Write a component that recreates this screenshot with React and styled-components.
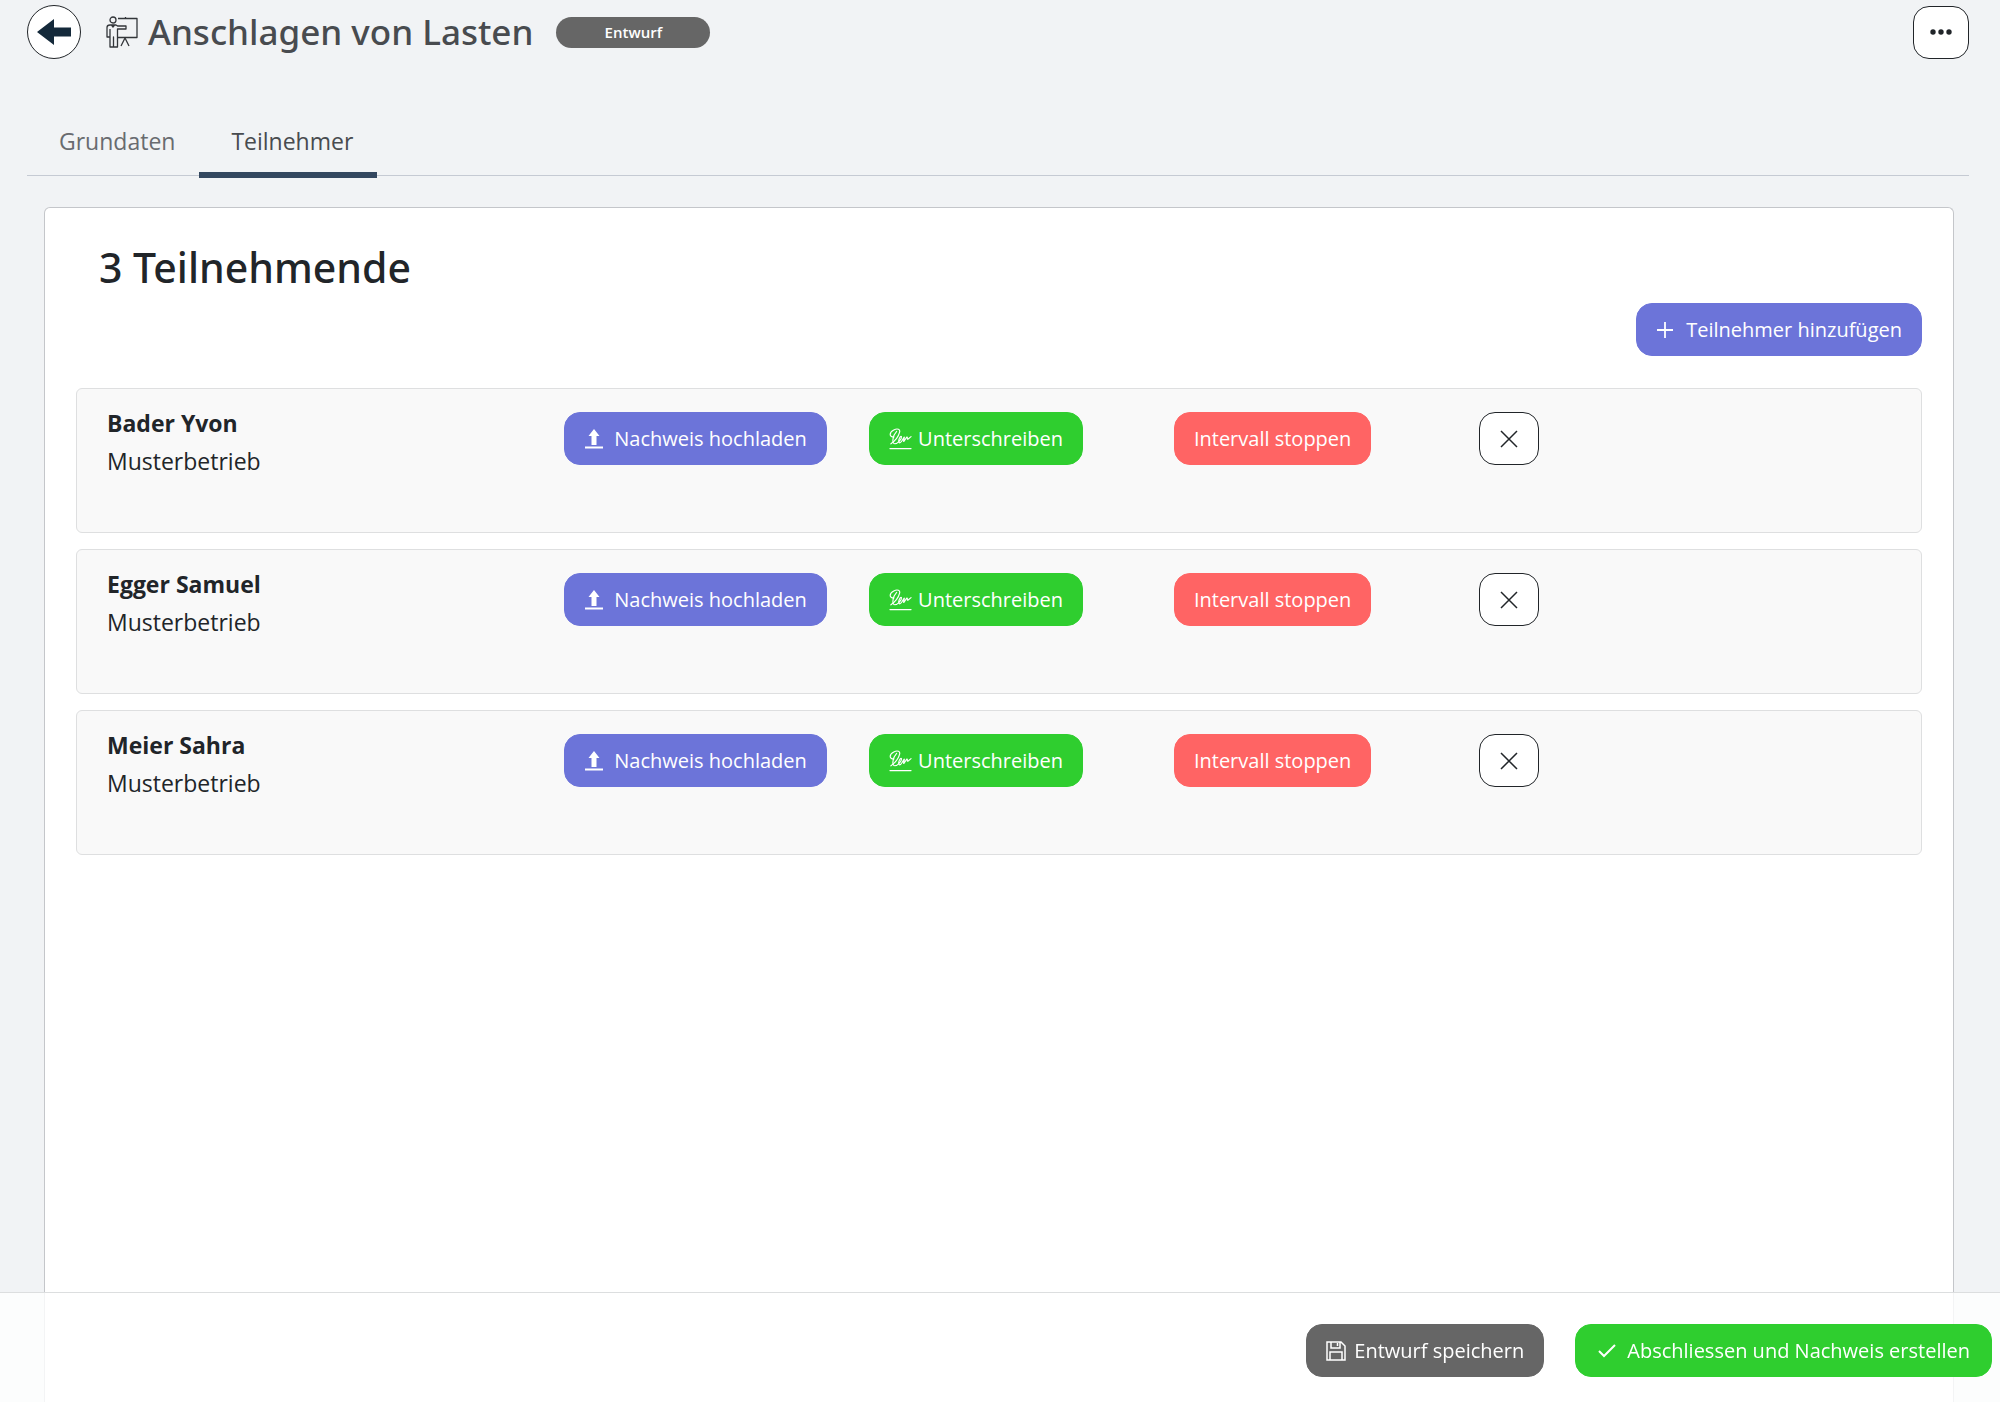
import React, { useState } from 'react'
import styled, { createGlobalStyle } from 'styled-components'

const participants = [
    { id: 1, name: 'Bader Yvon', company: 'Musterbetrieb' },
    { id: 2, name: 'Egger Samuel', company: 'Musterbetrieb' },
    { id: 3, name: 'Meier Sahra', company: 'Musterbetrieb' }
]

const BackIcon = () => (
    <svg width="36" height="28" viewBox="0 0 36 28" fill="#14293a" aria-hidden="true">
        <path d="M1 14 18 1v8.500h17v9H18V27z" />
    </svg>
)

const TrainingIcon = () => (
    <svg width="32" height="32" viewBox="0 0 32 32" fill="none" stroke="#33363a" strokeWidth="1.300" strokeLinejoin="round" aria-hidden="true">
        <circle cx="7" cy="4" r="3" />
        <path d="M12 2.500H31v19H11.500M19.500 2.500V1" />
        <path d="M4 9h6l1.500 1H20v3h-8.500V31H7.500V21V31H4V21H1V11.500Q1 9 4 9zM4 13v8M5.500 9L7 11l1.500-2" />
        <path d="M19 22l-4 8M19 22l4 8" />
    </svg>
)

const UploadIcon = () => (
    <svg width="20" height="20" viewBox="0 0 20 20" fill="currentColor" aria-hidden="true">
        <path d="M10 0l5.500 7H12.500v9h-5V7H4.500zM1 17.500h18v2H1z" />
    </svg>
)

const SignatureIcon = () => (
    <svg width="23" height="22" viewBox="0 0 24 22" fill="none" stroke="currentColor" strokeWidth="1.200" strokeLinecap="round" strokeLinejoin="round" aria-hidden="true">
        <path d="M5 9C0 9 0 4 5 1.500C9 -0.500 12 1 11 4C10 8 6 13 2 16" />
        <path d="M8 3C4 7 2.500 16 6 16C9 16 13.500 11 13 8.500C12 6.500 8.500 14 11 15C13 15.500 15.500 8.500 16 9S14.500 14 15.500 13.500S18.500 8 19 9S18.500 12 20 11L23 8.500" />
        <path d="M1 21h22" />
    </svg>
)

const PlusIcon = () => (
    <svg width="18" height="18" viewBox="0 0 18 18" stroke="currentColor" strokeWidth="1.800" aria-hidden="true">
        <path d="M9 1v16M1 9h16" />
    </svg>
)

const CloseIcon = () => (
    <svg width="18" height="18" viewBox="0 0 18 18" stroke="currentColor" strokeWidth="1.500" aria-hidden="true">
        <path d="M1 1l16 16M17 1L1 17" />
    </svg>
)

const MoreIcon = () => (
    <svg width="22" height="6" viewBox="0 0 22 6" fill="currentColor" aria-hidden="true">
        <circle cx="3" cy="3" r="2.700" />
        <circle cx="11" cy="3" r="2.700" />
        <circle cx="19" cy="3" r="2.700" />
    </svg>
)

const SaveIcon = () => (
    <svg width="20" height="20" viewBox="0 0 20 20" fill="none" stroke="currentColor" strokeWidth="1.500" aria-hidden="true">
        <path d="M1 1h14l4 4v14H1zM5 1v6h9V1M11.500 2v3M4 19v-8h12v8" />
    </svg>
)

const CheckIcon = () => (
    <svg width="20" height="14" viewBox="0 0 20 14" fill="none" stroke="currentColor" strokeWidth="2" aria-hidden="true">
        <path d="M2 7l5 5L18 1" />
    </svg>
)

const ParticipantRow = ({ participant, onRemove }) => (
    <Row>
        <Cell>
            <Name>{participant.name}</Name>
            <Company>{participant.company}</Company>
        </Cell>
        <Cell>
            <Button type="button" $color="#6c74d9" $gap="10px"><UploadIcon />Nachweis hochladen</Button>
        </Cell>
        <Cell>
            <Button type="button" $color="#2fce2f" $gap="6px"><SignatureIcon />Unterschreiben</Button>
        </Cell>
        <Cell>
            <Button type="button" $color="#ff6464">Intervall stoppen</Button>
        </Cell>
        <Cell>
            <OutlineButton type="button" aria-label="Entfernen" onClick={() => onRemove(participant.id)}><CloseIcon /></OutlineButton>
        </Cell>
    </Row>
)

const App = () => {
    const [tab, setTab] = useState('Teilnehmer')
    const [rows, setRows] = useState(participants)
    const handleRemove = id => setRows(rows.filter(r => r.id !== id))

    return (
        <Page>
            <GlobalStyle />
            <Header>
                <BackButton type="button" aria-label="Zurück"><BackIcon /></BackButton>
                <TitleGroup>
                    <TrainingIcon />
                    <Title>Anschlagen von Lasten</Title>
                </TitleGroup>
                <Badge>Entwurf</Badge>
                <MoreButton type="button" aria-label="Mehr"><MoreIcon /></MoreButton>
            </Header>
            <Tabs role="tablist">
                {['Grundaten', 'Teilnehmer'].map(label => (
                    <Tab key={label} type="button" role="tab" aria-selected={tab === label} $active={tab === label} onClick={() => setTab(label)}>
                        {label}
                    </Tab>
                ))}
            </Tabs>
            <Card>
                <Heading>{rows.length} Teilnehmende</Heading>
                <Actions>
                    <Button type="button" $color="#6c74d9" $gap="12px"><PlusIcon />Teilnehmer hinzufügen</Button>
                </Actions>
                <List>
                    {rows.map(r => <ParticipantRow key={r.id} participant={r} onRemove={handleRemove} />)}
                </List>
            </Card>
            <Footer>
                <Button type="button" $color="#666666"><SaveIcon />Entwurf speichern</Button>
                <Button type="button" $color="#2fce2f" $gap="10px" $pad="21px"><CheckIcon />Abschliessen und Nachweis erstellen</Button>
            </Footer>
        </Page>
    )
}

const GlobalStyle = createGlobalStyle`
    * {
        box-sizing: border-box;
    }
    body {
        margin: 0;
        background: #f1f3f5;
        color: #212529;
        font-family: 'Segoe UI', 'Open Sans', 'Noto Sans', sans-serif;
        font-size: 23px;
    }
    button {
        font-family: inherit;
        cursor: pointer;
    }
`

const Page = styled.div`
    display: flex;
    flex-direction: column;
    min-height: 100vh;
`

const Header = styled.header`
    display: flex;
    align-items: center;
    padding: 5px 31px 0 27px;
`

const BackButton = styled.button`
    display: flex;
    align-items: center;
    justify-content: center;
    width: 54px;
    height: 54px;
    padding: 0;
    border: 1px solid #212529;
    border-radius: 50%;
    background: #fff;
`

const TitleGroup = styled.div`
    display: flex;
    align-items: center;
    gap: 10px;
    margin: 0 23px 0 25px;
`

const Title = styled.h1`
    margin: 0;
    color: #484b4f;
    font-family: 'Segoe UI', 'Noto Sans', sans-serif;
    font-size: 35px;
    font-weight: 500;
    line-height: 48px;
`

const Badge = styled.span`
    width: 154px;
    border-radius: 16px;
    background: #666;
    color: #fff;
    font-size: 15px;
    font-weight: 600;
    line-height: 31px;
    text-align: center;
`

const Button = styled.button`
    display: inline-flex;
    align-items: center;
    gap: ${props => props.$gap || '8px'};
    height: 53px;
    padding: 0 ${props => props.$pad || '19px'};
    border: 1px solid ${props => props.$color};
    border-radius: 16px;
    background: ${props => props.$color};
    color: #fff;
    font-size: 20px;
    white-space: nowrap;
`

const OutlineButton = styled(Button)`
    justify-content: center;
    width: 60px;
    padding: 0;
    border-color: #212529;
    background: #fff;
    color: #212529;
`

const MoreButton = styled(OutlineButton)`
    width: 56px;
    margin-left: auto;
`

const Tabs = styled.div`
    display: flex;
    margin: 50px 31px 0 27px;
    border-bottom: 1px solid #c5cad3;
`

const Tab = styled.button`
    height: 69px;
    margin-bottom: -3px;
    padding: 0 24px 0 32px;
    border: 0;
    border-bottom: 6px solid ${props => props.$active ? '#33475f' : 'transparent'};
    background: transparent;
    color: ${props => props.$active ? '#484b4f' : '#686b6f'};
    font-size: 23px;
`

const Card = styled.main`
    flex: 1;
    margin: 31px 46px 0 44px;
    padding: 31px 31px 140px;
    border: 1px solid #c4c6ca;
    border-bottom: 0;
    border-radius: 6px 6px 0 0;
    background: #fff;
`

const Heading = styled.h2`
    margin: 0;
    padding-left: 23px;
    font-family: 'Segoe UI', 'Noto Sans', sans-serif;
    font-size: 41px;
    font-weight: 500;
    line-height: 56px;
`

const Actions = styled.div`
    display: flex;
    justify-content: flex-end;
    margin-top: 8px;
`

const List = styled.div`
    display: flex;
    flex-direction: column;
    gap: 16px;
    margin-top: 32px;
`

const Row = styled.section`
    display: grid;
    grid-template-columns: 3fr 2fr 2fr 2fr 3fr;
    min-height: 145px;
    padding: 15px 0 0 15px;
    border: 1px solid #dedfe0;
    border-radius: 6px;
    background: #f9f9f9;
`

const Cell = styled.div`
    min-width: 0;
    padding-left: 15px;

    & > button {
        margin-top: 8px;
    }
`

const Name = styled.div`
    font-weight: 700;
    line-height: 38px;
`

const Company = styled.div`
    line-height: 38px;
`

const Footer = styled.footer`
    position: fixed;
    right: 0;
    bottom: 0;
    left: 0;
    display: flex;
    justify-content: flex-end;
    gap: 31px;
    padding: 31px 8px 25px;
    border-top: 1px solid #dcdedf;
    background: rgba(255, 255, 255, 0.8);
`

export default App
